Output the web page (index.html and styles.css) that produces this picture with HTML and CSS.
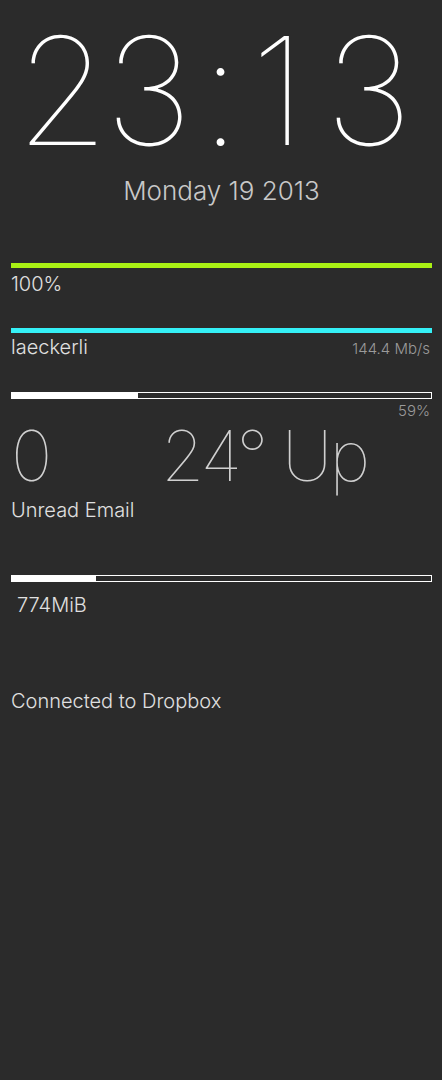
FILE: index.html
```html
<!DOCTYPE html>
<html>
<head>
<meta charset="utf-8">
<link rel="stylesheet" href="styles.css">
</head>
<body>
<div class="page">
  <div class="clock">23<span class="colon">:</span><span class="one">1</span>3</div>
  <div class="date">Monday 19 2013</div>

  <div class="bar bar-green"></div>
  <div class="label">100%</div>

  <div class="bar bar-cyan"></div>
  <div class="row">
    <span class="label">laeckerli</span>
    <span class="small">144.4 Mb/s</span>
  </div>

  <div class="meter meter-cpu"><div class="fill" style="width:30%"></div></div>
  <div class="small right">59%</div>

  <div class="bigrow">
    <span class="big mail">0</span>
    <span class="big temp">24° Up</span>
  </div>
  <div class="label unread">Unread Email</div>

  <div class="meter meter-mem"><div class="fill" style="width:20%"></div></div>
  <div class="label indent">774MiB</div>

  <div class="label dropbox">Connected to Dropbox</div>
</div>
</body>
</html>
```
FILE: styles.css
```css
html, body {
  margin: 0;
  padding: 0;
  background: #2b2b2b;
  height: 100%;
}
.page {
  padding: 0 10px 0 11px;
  font-family: Inter, "Liberation Sans", sans-serif;
  color: #e0e0e0;
}
.clock {
  font-size: 150px;
  font-weight: 100;
  color: #ffffff;
  text-align: center;
  line-height: 120px;
  margin-top: 31px;
  letter-spacing: -4px;
  padding-right: 19px;
}
.clock .colon {
  margin: 0 14px 0 12px;
}
.clock .one {
  margin-right: 23px;
}
.date {
  font-size: 26px;
  font-weight: 300;
  color: #c8c8c8;
  text-align: center;
  margin-top: 24px;
}
.bar {
  height: 5px;
}
.bar-green {
  background: #a9f014;
  margin-top: 57px;
}
.bar-cyan {
  background: #35f0f6;
  margin-top: 32px;
}
.label {
  font-size: 20px;
  font-weight: 300;
  color: #e0e0e0;
  line-height: 24px;
  margin-top: 4px;
}
.row {
  display: flex;
  justify-content: space-between;
  align-items: baseline;
  padding-right: 2px;
}
.row .label {
  margin-top: 2px;
}
.small {
  font-size: 15px;
  font-weight: 300;
  color: #9a9a9a;
}
.right {
  text-align: right;
  margin-top: 2px;
  padding-right: 2px;
}
.meter {
  height: 5px;
  border: 1px solid #ffffff;
  background: #2b2b2b;
}
.meter .fill {
  height: 100%;
  background: #ffffff;
}
.meter-cpu {
  margin-top: 33px;
}
.bigrow {
  display: flex;
  font-size: 70px;
  font-weight: 100;
  color: #d0d0d0;
  line-height: 1;
  margin-top: 1px;
}
.big.mail {
  width: 150px;
}
.big.temp {
  letter-spacing: -3px;
}
.unread {
  margin-top: 7px;
}
.meter-mem {
  margin-top: 53px;
}
.indent {
  padding-left: 6px;
  margin-top: 11px;
}
.dropbox {
  margin-top: 72px;
}
```
